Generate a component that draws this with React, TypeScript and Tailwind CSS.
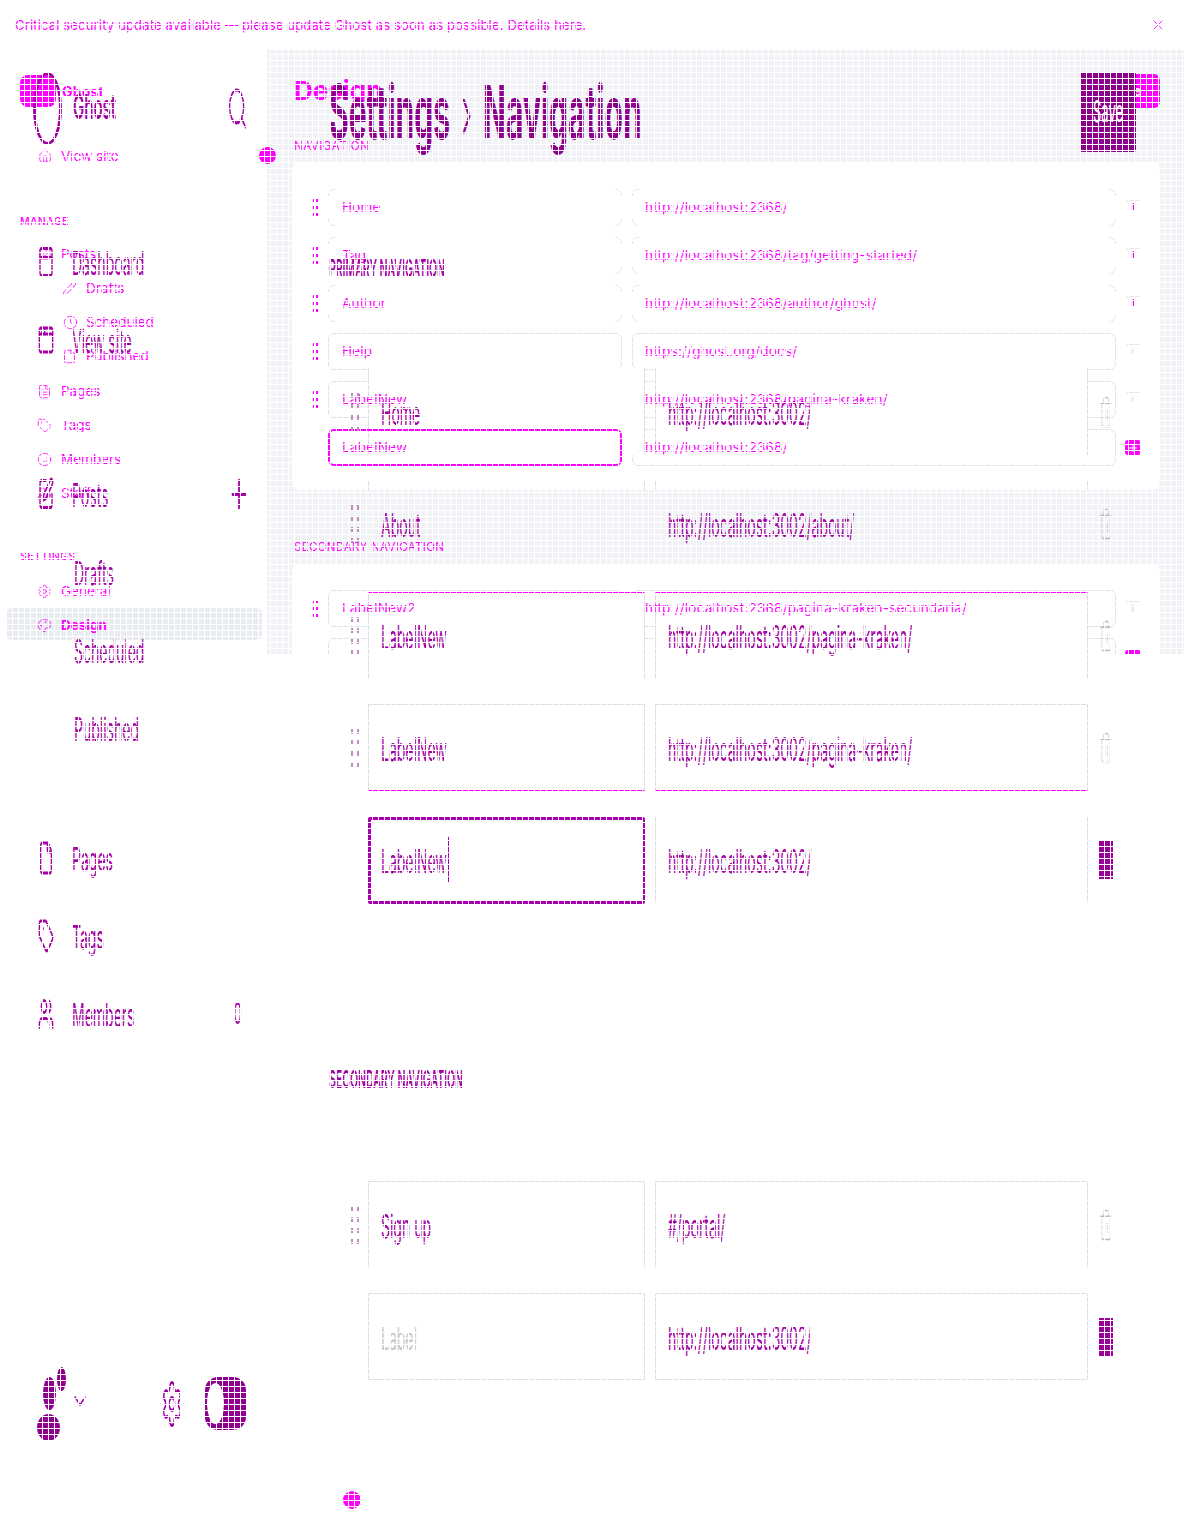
import { AppWindow, File, Home, Plus, Search, Settings, Smile, SquarePen, Tag, Trash2, Users, X, Clock, Pencil, FileText, Palette, UserCog, ChevronDown, PanelTop } from 'lucide-react'

const magenta = 'text-[#ff00ff]'
const old = 'text-[#a400a4]'

interface TextRow {
  label: string
  url: string
}

// current admin page, only the top 655px of it shows
const currentRows: TextRow[] = [
  { label: 'Home', url: 'http://localhost:2368/' },
  { label: 'Tag', url: 'http://localhost:2368/tag/getting-started/' },
  { label: 'Author', url: 'http://localhost:2368/author/ghost/' },
  { label: 'Help', url: 'https://ghost.org/docs/' },
  { label: 'LabelNew', url: 'http://localhost:2368/pagina-kraken/' },
]

const currentNav = [
  { label: 'Pages', icon: FileText },
  { label: 'Tags', icon: Tag },
  { label: 'Members', icon: Smile },
  { label: 'Staff', icon: UserCog },
]

function Handle() {
  return (
    <div className="grid w-[6px] grid-cols-2 gap-x-[2px] gap-y-[4px] text-[#ff00ff]">
      {[0, 1, 2, 3, 4, 5].map((i) => (
        <span key={i} className="h-[3px] w-[2px] bg-current" />
      ))}
    </div>
  )
}

function OldHandle() {
  return (
    <div className="grid w-[8px] grid-cols-2 gap-x-[4px] gap-y-[6px] text-[#c08cc0]">
      {[0, 1, 2, 3, 4, 5, 6, 7].map((i) => (
        <span key={i} className="h-[5px] w-[2px] bg-current" />
      ))}
    </div>
  )
}

// what is left of the trash icon: its lid and the middle of the can
function TrashLeft({ strong }: { strong?: boolean }) {
  return (
    <svg width="14" height="14" viewBox="0 0 14 14" className="-mt-[3px]">
      <path d="M0.5 1.5h13" stroke="#e2e2ea" strokeWidth="1" />
      <rect x="5" y="4" width="4" height="8" fill="#ececf2" />
      {strong && <path d="M7.5 4v8" stroke="#ff00ff" strokeWidth="1" />}
    </svg>
  )
}

function CornerCover() {
  // rows that did not change: only the round corners are left of the border
  return (
    <>
      <span className="absolute -top-px -bottom-px left-[6px] right-[6px] bg-white" />
      <span className="absolute top-[6px] bottom-[6px] -left-px -right-px bg-white" />
    </>
  )
}

function CurrentBase() {
  const box = 'relative h-[37px] rounded-md border border-[#dbe4ea]'
  return (
    <div className="absolute inset-x-0 top-0 flex h-[655px] flex-col overflow-hidden bg-white">
      <div className="h-[50px] shrink-0" />
      <div className="flex flex-1">
        <aside className="w-[267px] shrink-0 pl-[6px] pt-[558px]">
          <div className="h-[32px] w-[256px] rounded-md bg-[#e8ebf0]" />
        </aside>
        <main className="flex-1 bg-[#f1f2f6] pl-[25px] pr-[24px] pt-[112px]">
          <div className="h-[328px] rounded-lg bg-white pl-[36px] pr-[44px] pt-[27px]">
            {[0, 1, 2, 3, 4, 5].map((i) => (
              <div key={i} className="mb-[11px] flex gap-[10px]">
                <div className={`w-[294px] ${box}`}>{i < 3 && <CornerCover />}</div>
                <div className={`flex-1 ${box}`}>{i < 3 && <CornerCover />}</div>
              </div>
            ))}
          </div>
          <div className="mt-[74px] h-[200px] rounded-lg bg-white pl-[36px] pr-[44px] pt-[26px]">
            {[0, 1].map((i) => (
              <div key={i} className="mb-[11px] flex gap-[10px]">
                <div className={`w-[294px] ${box}`} />
                <div className={`flex-1 ${box}`} />
              </div>
            ))}
          </div>
        </main>
      </div>
    </div>
  )
}

// the old boxes wipe out what lies under them, as in the picture
function OldBoxes() {
  const rows = [
    { a: 'border-x border-[#dddddd]', h: 'h-[87px]', mb: 'mb-[25px]' },
    { a: 'border-x border-[#dddddd]', h: 'h-[10px]', mb: 'mb-[102px]' },
    { a: 'border-x border-[#dddddd] border-t border-t-[#ff00ff]', h: 'h-[87px]', mb: 'mb-[25px]' },
    { a: 'border border-[#dddddd] border-b-[#ff00ff]', h: 'h-[87px]', mb: 'mb-[25px]' },
    { a: 'border-x border-[#dddddd]', h: 'h-[87px]', mb: 'mb-[278px]' },
    { a: 'border-x border-t border-[#dddddd]', h: 'h-[87px]', mb: 'mb-[25px]' },
    { a: 'border border-[#dddddd]', h: 'h-[87px]', mb: 'mb-[25px]' },
  ]
  return (
    <div className="absolute inset-x-0 top-0 pl-[368px] pt-[368px]">
      {rows.map((r, i) => (
        <div key={i} className={`flex gap-[10px] ${r.mb}`}>
          <div className={`w-[277px] rounded-[1px] bg-white ${r.h} ${r.a}`} />
          <div className={`w-[433px] rounded-[1px] bg-white ${r.h} ${r.a}`} />
        </div>
      ))}
    </div>
  )
}

function PlusChip() {
  return (
    <span className="flex h-[15px] w-[16px] items-center justify-center rounded-[3px] bg-[#ff00ff] text-white">
      <Plus size={12} strokeWidth={2} />
    </span>
  )
}

function CurrentRow({ row, strong }: { row: TextRow; strong?: boolean }) {
  return (
    <div className="mb-[11px] flex h-[37px] items-center">
      <div className="w-[36px] pl-[20px]">
        <Handle />
      </div>
      <div className="w-[294px] pl-[14px]">{row.label}</div>
      <div className="ml-[10px] flex-1 pl-[13px]">{row.url}</div>
      <div className="flex w-[44px] justify-center pr-[10px]">
        <TrashLeft strong={strong} />
      </div>
    </div>
  )
}

function CurrentText() {
  const sideRow = 'flex h-[34px] items-center text-[13.5px] tracking-normal'
  return (
    <div className={`absolute inset-x-0 top-0 h-[655px] overflow-hidden text-[13.5px] tracking-[0.21px] ${magenta}`}>
      <div className="flex h-[50px] items-center justify-between pl-[15px] pr-[18px] text-[13px] tracking-[0.17px]">
        <span className="pt-[1px]">Critical security update available — please update Ghost as soon as possible. Details here.</span>
        <X size={16} strokeWidth={1.25} />
      </div>
      <div className="flex">
        <aside className="w-[267px] shrink-0">
          <div className="flex items-center gap-[6px] pl-[20px] pt-[25px]">
            <div className="h-[32px] w-[36px] rounded-lg bg-[#ff00ff]" />
            <span className="text-[14px] font-bold">Ghost</span>
          </div>
          <div className={`${sideRow} mt-[32px] gap-[9px] pl-[38px]`}>
            <Home size={14} strokeWidth={1.25} />
            <span>View site</span>
          </div>
          <div className="flex h-[64px] items-end pb-[7px] pl-[20px] text-[10.5px] font-medium tracking-[0.4px]">MANAGE</div>
          <div className={`${sideRow} gap-[9px] pl-[38px]`}>
            <SquarePen size={14} strokeWidth={1.25} />
            <span>Posts</span>
          </div>
          <div className={`${sideRow} gap-[9px] pl-[62px]`}>
            <Pencil size={15} strokeWidth={1.25} />
            <span>Drafts</span>
          </div>
          <div className={`${sideRow} gap-[8px] pl-[63px]`}>
            <Clock size={15} strokeWidth={1.25} />
            <span>Scheduled</span>
          </div>
          <div className={`${sideRow} gap-[9px] pl-[62px]`}>
            <File size={15} strokeWidth={1.25} />
            <span>Published</span>
          </div>
          <div className="pt-[1px]">
            {currentNav.map((n) => (
              <div key={n.label} className={`${sideRow} gap-[9px] pl-[37px]`}>
                <n.icon size={15} strokeWidth={1.25} />
                <span>{n.label}</span>
              </div>
            ))}
          </div>
          <div className="flex h-[64px] items-end pb-[9px] pl-[20px] text-[10.5px] font-medium tracking-[0.4px]">SETTINGS</div>
          <div className={`${sideRow} gap-[9px] pl-[37px]`}>
            <Settings size={15} strokeWidth={1.25} />
            <span>General</span>
          </div>
          <div className={`${sideRow} gap-[9px] pl-[37px] font-bold`}>
            <Palette size={15} strokeWidth={1.25} />
            <span>Design</span>
          </div>
        </aside>
        <main className="flex-1 pl-[25px] pr-[24px]">
          <div className="flex items-start justify-between pl-[2px] pt-[24px]">
            <h1 className="text-[26px] font-bold leading-[34px] tracking-normal">Design</h1>
            <span className="flex h-[34px] w-[70px] items-center justify-center rounded-md bg-[#ff00ff] font-bold text-white">Save</span>
          </div>
          <div className="mt-[31px] h-[14px] pl-[2px] text-[11.5px] leading-[14px] tracking-[0.5px]">NAVIGATION</div>
          <div className="mt-[9px] h-[328px] pt-[27px]">
            {currentRows.map((r, i) => (
              <CurrentRow key={r.label} row={r} strong={i < 3} />
            ))}
            <div className="mb-[11px] flex h-[37px] items-center">
              <div className="w-[36px]" />
              <div className="flex h-[37px] w-[294px] items-center rounded-md border-2 border-[#ff00ff] pl-[12px]">LabelNew</div>
              <div className="ml-[10px] flex-1 pl-[13px]">http://localhost:2368/</div>
              <div className="flex w-[44px] justify-center pr-[10px]">
                <PlusChip />
              </div>
            </div>
          </div>
          <div className="mt-[50px] h-[14px] pl-[2px] text-[11.5px] leading-[14px] tracking-[0.3px]">SECONDARY NAVIGATION</div>
          <div className="mt-[10px] pt-[26px]">
            <CurrentRow row={{ label: 'LabelNew2', url: 'http://localhost:2368/pagina-kraken-secundaria/' }} />
            <div className="flex h-[37px] items-center justify-end pr-[44px]">
              <div className="mr-[-25px] mt-[2px] flex justify-center">
                <PlusChip />
              </div>
            </div>
          </div>
        </main>
      </div>
    </div>
  )
}

// old admin page, stretched to the full height
function Tall({ children, className = '' }: { children: React.ReactNode; className?: string }) {
  return <span className={`inline-block scale-y-[2.3] whitespace-nowrap ${className}`}>{children}</span>
}

const oldNavTop = [
  { label: 'Dashboard', icon: PanelTop },
  { label: 'View site', icon: AppWindow },
]
const oldNavBottom = [
  { label: 'Pages', icon: File },
  { label: 'Tags', icon: Tag },
  { label: 'Members', icon: Users },
]

function OldNav({ label, icon: Icon, after }: { label: string; icon: typeof File; after?: React.ReactNode }) {
  return (
    <div className="flex h-[78px] items-center pl-[38px]">
      <Icon size={16} strokeWidth={2} className="mr-[18px] shrink-0 scale-y-[2.25]" />
      <Tall>{label}</Tall>
      {after}
    </div>
  )
}

function OldSub({ label }: { label: string }) {
  return (
    <div className="flex h-[78px] items-center pl-[74px]">
      <Tall>{label}</Tall>
    </div>
  )
}

interface OldRowProps {
  label: string
  url: string
  handle?: boolean
  focus?: boolean
  plus?: boolean
  muted?: boolean
}

function OldRow({ label, url, handle, focus, plus, muted }: OldRowProps) {
  return (
    <div className="mb-[26px] flex h-[86px] items-center">
      <div className="w-[39px] pl-[22px]">{handle && <OldHandle />}</div>
      <div
        className={
          focus
            ? 'flex h-[87px] w-[277px] items-center rounded-[2px] border-[3px] border-[#a800b0] pl-[10px]'
            : 'flex h-[86px] w-[277px] items-center pl-[13px]'
        }
      >
        <Tall className={muted ? 'text-[#c8c8c8]' : ''}>{label}</Tall>
        {focus && <span className="ml-[1px] h-[46px] w-px bg-[#a800b0]" />}
      </div>
      <div className="ml-[10px] w-[432px] pl-[13px]">
        <Tall>{url}</Tall>
      </div>
      <div className="flex w-[37px] justify-center">
        {plus ? (
          <span className="h-[38px] w-[14px] bg-[#9a009a]" />
        ) : (
          <Trash2 size={14} strokeWidth={1} className="scale-y-[2.5] text-[#bbbbbb]" />
        )}
      </div>
    </div>
  )
}

function OldText() {
  return (
    <div className={`absolute inset-x-0 top-0 flex text-[14px] ${old}`}>
      <aside className="w-[267px] shrink-0 pt-[72px]">
        <div className="flex h-[73px] items-center">
          <div className="ml-[33px] mr-[11px] h-[73px] w-[29px] shrink-0 rounded-[50%] border-[3px] border-[#a000a0]" />
          <Tall className="text-[15px] font-semibold">Ghost</Tall>
          <Search size={21} strokeWidth={1.5} className="ml-[111px] scale-y-[2.35]" />
        </div>
        <div className="mt-[78px]">
          {oldNavTop.map((n) => (
            <OldNav key={n.label} label={n.label} icon={n.icon} />
          ))}
        </div>
        <div className="mt-[76px]">
          <OldNav
            label="Posts"
            icon={SquarePen}
            after={<Plus size={22} strokeWidth={2} className="ml-[120px] scale-y-[2.1]" />}
          />
          <OldSub label="Drafts" />
          <OldSub label="Scheduled" />
          <OldSub label="Published" />
        </div>
        <div className="mt-[52px]">
          {oldNavBottom.map((n) => (
            <OldNav
              key={n.label}
              label={n.label}
              icon={n.icon}
              after={n.label === 'Members' ? <Tall className="ml-[99px] text-[13px]">0</Tall> : undefined}
            />
          ))}
        </div>
        <div className="mt-[314px] flex h-[74px] items-start pl-[37px]">
          <svg width="30" height="74" viewBox="0 0 30 74" className="shrink-0 text-[#8f008f]" fill="currentColor">
            <ellipse cx="12.5" cy="26.5" rx="6.5" ry="16.5" />
            <ellipse cx="24.5" cy="12" rx="4.5" ry="12" />
            <ellipse cx="11.5" cy="60.5" rx="11.5" ry="13.5" />
          </svg>
          <ChevronDown size={20} strokeWidth={1.5} className="ml-[3px] mt-[24px] shrink-0 scale-y-[1.6]" />
          <Settings size={22} strokeWidth={1.5} className="ml-[71px] mt-[26px] shrink-0 scale-y-[2.35]" />
          <div className="ml-[22px] mt-[10px] flex h-[53px] w-[41px] shrink-0 items-center rounded-[13px] bg-[#8f008f] pl-[2px]">
            <span className="h-[41px] w-[17px] rounded-[50%] bg-white" />
          </div>
        </div>
      </aside>
      <main className="flex-1 pl-[62px]">
        <div className="mt-[72px] flex h-[80px] items-center justify-between pr-[48px]">
          <span className="inline-block scale-y-[2.5] whitespace-nowrap text-[30px] font-bold text-[#8f008f]">
            Settings <span className="mx-[4px] font-light">›</span> Navigation
          </span>
          <span className="flex h-[80px] w-[56px] items-center justify-center rounded-[2px] bg-[#8b008b] text-white">
            <Tall className="text-[13px]">Save</Tall>
          </span>
        </div>
        <div className="mb-[89px] mt-[108px] flex h-[20px] items-center">
          <Tall className="text-[10.5px] font-semibold">PRIMARY NAVIGATION</Tall>
        </div>
        <OldRow label="Home" url="http://localhost:3002/" handle />
        <OldRow label="About" url="http://localhost:3002/about/" handle />
        <OldRow label="LabelNew" url="http://localhost:3002/pagina-kraken/" handle />
        <OldRow label="LabelNew" url="http://localhost:3002/pagina-kraken/" handle />
        <OldRow label="LabelNew" url="http://localhost:3002/" focus plus />
        <div className="mb-[91px] mt-[168px] flex h-[20px] items-center">
          <Tall className="text-[10.5px] font-semibold">SECONDARY NAVIGATION</Tall>
        </div>
        <OldRow label="Sign up" url="#/portal/" handle />
        <OldRow label="Label" url="http://localhost:3002/" plus muted />
      </main>
    </div>
  )
}

export default function App() {
  return (
    <div className="relative h-[1525px] w-[1184px] overflow-hidden bg-white [font-family:Inter,sans-serif]">
      <CurrentBase />
      <OldBoxes />
      <CurrentText />
      <OldText />
      {/* round buttons floating on the edge */}
      <span className="absolute left-[259px] top-[147px] h-[17px] w-[17px] rounded-full bg-[#ff00ff]" />
      <span className="absolute left-[343px] top-[1491px] h-[18px] w-[18px] rounded-full bg-[#ff00ff]" />
      {/* 1px white mesh over everything */}
      <div className="pointer-events-none absolute inset-0 bg-[size:6px_6px] [background-image:linear-gradient(90deg,#fff_1px,transparent_1px),linear-gradient(180deg,#fff_1px,transparent_1px)]" />
    </div>
  )
}
